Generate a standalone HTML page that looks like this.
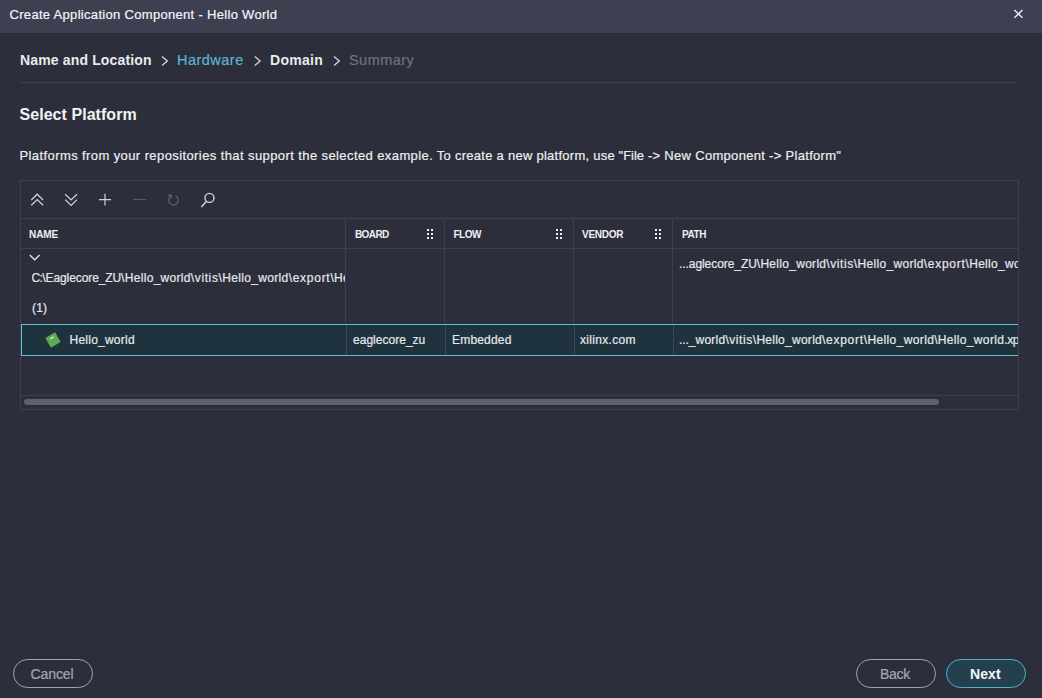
<!DOCTYPE html>
<html lang="en">
<head>
<meta charset="utf-8">
<title>Create Application Component - Hello World</title>
<style>
*{box-sizing:border-box;margin:0;padding:0}
html,body{width:1042px;height:698px;overflow:hidden;background:#2c2f3b}
body{font-family:"Liberation Sans",sans-serif;color:#f0f1f4;position:relative;font-size:13px}
.abs{position:absolute;white-space:nowrap;line-height:1}
.rg{-webkit-text-stroke:.2px currentColor}
.clip{position:absolute;white-space:nowrap;line-height:20px;overflow:hidden}
#titlebar{position:absolute;left:0;top:0;width:1042px;height:33px;background:#3c4051}
#title{left:9.5px;top:8px;font-size:13px;color:#f4f5f7;letter-spacing:.31px}
#closex{position:absolute;left:1013.5px;top:9px;width:10px;height:10px}
.crumb{font-size:14px;top:53px}
.crumb.b{font-weight:bold;color:#e9eaee;letter-spacing:.11px}
.crumb.a{color:#5fb4cf;letter-spacing:.48px;font-size:14.5px;top:52.6px}
.crumb.d{color:#6d7285;letter-spacing:.45px;font-size:14.5px;top:52.6px}
.chev{position:absolute;top:55px;width:8px;height:12px}
#hr{position:absolute;left:20px;top:82px;width:998px;height:1px;background:#3c4050}
#h1{left:19.5px;top:107px;font-size:16px;font-weight:bold;color:#f2f3f5;letter-spacing:.05px}
#desc{left:19.5px;top:149px;font-size:13px;color:#eceef1;white-space:pre}
#box{position:absolute;left:20px;top:180px;width:999px;height:230px;border:1px solid #3c4050}
.hl{position:absolute;left:21px;width:997px;height:1px;background:#3c4050}
.vl{position:absolute;width:1px;background:#3c4050;top:219px;height:105px}
.th{font-size:10px;font-weight:bold;color:#eef0f3;top:229.5px}
.td{font-size:12px;color:#e6e8ec;letter-spacing:.24px}
.grip{position:absolute;top:229px;width:6px;height:10px}
.grip i{position:absolute;width:2px;height:2px;background:#eef0f3}
#sel{position:absolute;left:21px;top:324px;width:997px;height:32px;background:#1f333e;border:1px solid #5fc0d5;border-right:none}
.svl{position:absolute;width:1px;background:#3d4456;top:325px;height:30px}
#sb{position:absolute;left:24px;top:399px;width:915px;height:6px;border-radius:3px;background:#5c6071}
.btn{position:absolute;top:659px;width:80px;height:29px;border-radius:15px;border:1px solid #a0a3b0}
.bt{font-size:14px;top:667px;color:#a3a6b3}
#nextb{background:#24404f;border-color:#4fb0cb}
#next{color:#f4f6f8;font-weight:bold}
svg{display:block;overflow:visible}
.tb{position:absolute;left:0;top:0;width:1042px;height:698px;pointer-events:none}
</style>
</head>
<body>
<div id="titlebar"></div>
<div id="title" class="abs rg">Create Application Component - Hello World</div>

<div class="abs crumb b" id="c1" style="left:20px;letter-spacing:.15px">Name and Location</div>
<div class="abs rg crumb a" id="c2" style="left:177px">Hardware</div>
<div class="abs crumb b" id="c3" style="left:270px;letter-spacing:.3px">Domain</div>
<div class="abs rg crumb d" id="c4" style="left:349px">Summary</div>
<div id="hr"></div>

<div id="h1" class="abs">Select Platform</div>
<div id="desc" class="abs rg"><span style="letter-spacing:.405px">Platforms from your repositories that support the selected example.</span><span style="letter-spacing:.263px"> To create a new platform, use</span><span style="letter-spacing:-.03px"> "File</span><span style="letter-spacing:.305px"> -&gt; New Component -&gt; Platform"</span></div>

<div id="box"></div>
<div class="hl" style="top:218px"></div>
<div class="hl" style="top:248px"></div>
<div class="hl" style="top:395px"></div>
<div class="vl" style="left:345px"></div>
<div class="vl" style="left:444px"></div>
<div class="vl" style="left:573px"></div>
<div class="vl" style="left:672px"></div>

<div class="abs th" id="th1" style="left:29px;letter-spacing:-.08px">NAME</div>
<div class="abs th" id="th2" style="left:355px;letter-spacing:-.6px">BOARD</div>
<div class="abs th" id="th3" style="left:453.5px;letter-spacing:-.5px">FLOW</div>
<div class="abs th" id="th4" style="left:582px;letter-spacing:-.28px">VENDOR</div>
<div class="abs th" id="th5" style="left:682px;letter-spacing:-.4px">PATH</div>

<div class="grip" style="left:427px"><i style="left:0;top:0"></i><i style="left:4px;top:0"></i><i style="left:0;top:4px"></i><i style="left:4px;top:4px"></i><i style="left:0;top:8px"></i><i style="left:4px;top:8px"></i></div>
<div class="grip" style="left:556px"><i style="left:0;top:0"></i><i style="left:4px;top:0"></i><i style="left:0;top:4px"></i><i style="left:4px;top:4px"></i><i style="left:0;top:8px"></i><i style="left:4px;top:8px"></i></div>
<div class="grip" style="left:655px"><i style="left:0;top:0"></i><i style="left:4px;top:0"></i><i style="left:0;top:4px"></i><i style="left:4px;top:4px"></i><i style="left:0;top:8px"></i><i style="left:4px;top:8px"></i></div>

<div class="clip rg td" id="g1" style="left:31.5px;top:268px;width:313.5px"><span style="letter-spacing:-0.600px">C:</span><span style="letter-spacing:-0.096px">\Eaglecore_ZU</span><span style="letter-spacing:0.306px">\Hello_world</span><span style="letter-spacing:0.617px">\vitis</span><span style="letter-spacing:0.339px">\Hello_world</span><span style="letter-spacing:0.730px">\export</span><span style="letter-spacing:0.314px">\Hello_world</span></div>
<div class="abs rg td" id="g2" style="left:32px;top:302.3px;letter-spacing:.15px">(1)</div>
<div class="clip rg td" id="g3" style="left:679px;top:254px;width:339px"><span style="letter-spacing:-0.072px">...</span><span style="letter-spacing:-0.064px">aglecore_ZU</span><span style="letter-spacing:0.289px">\Hello_world</span><span style="letter-spacing:0.583px">\vitis</span><span style="letter-spacing:0.322px">\Hello_world</span><span style="letter-spacing:0.730px">\export</span><span style="letter-spacing:0.314px">\Hello_world</span></div>

<div id="sel"></div>
<div class="svl" style="left:346px"></div>
<div class="svl" style="left:445px"></div>
<div class="svl" style="left:574px"></div>
<div class="svl" style="left:673px"></div>
<div class="abs rg td" id="r1" style="left:69.5px;top:333.5px">Hello_world</div>
<div class="abs rg td" id="r2" style="left:353px;top:333.5px;letter-spacing:.02px">eaglecore_zu</div>
<div class="abs rg td" id="r3" style="left:452px;top:333.5px;letter-spacing:.19px">Embedded</div>
<div class="abs rg td" id="r4" style="left:580px;top:333.5px;letter-spacing:.32px">xilinx.com</div>
<div class="clip rg td" id="r5" style="left:679px;top:329.5px;width:339px"><span style="letter-spacing:-0.139px">...</span><span style="letter-spacing:0.240px">_world</span><span style="letter-spacing:0.567px">\vitis</span><span style="letter-spacing:0.264px">\Hello_world</span><span style="letter-spacing:0.730px">\export</span><span style="letter-spacing:0.364px">\Hello_world</span><span style="letter-spacing:0.331px">\Hello_world</span><span style="letter-spacing:-0.369px">.xpfm</span></div>

<div id="sb"></div>

<svg class="tb" viewBox="0 0 1042 698">
<path id="closex" d="M1014.4 10 L1022.5 17.8 M1022.5 10 L1014.4 17.8" stroke="#f4f5f7" stroke-width="1.3" fill="none"/>
<!-- breadcrumb chevrons -->
<g fill="none" stroke="#cfd2d9" stroke-width="1.4">
<path d="M162 56.5 L167.3 61 L162 65.5"/>
<path d="M254.8 56.5 L260.1 61 L254.8 65.5"/>
<path d="M334 56.5 L339.3 61 L334 65.5"/>
</g>
<!-- toolbar icons -->
<g fill="none" stroke="#d3d5dc" stroke-width="1.2">
<path d="M31.3 200 L37.2 194.2 L43.1 200 M31.3 205.3 L37.2 199.5 L43.1 205.3"/>
<path d="M65.2 194.2 L71.1 200 L77 194.2 M65.2 199.6 L71.1 205.4 L77 199.6"/>
<path d="M99 199.6 H111.1 M105 193.8 V205.4"/>
<circle cx="209.5" cy="197.9" r="4.5" stroke-width="1.4"/>
<path d="M206.2 201.6 L201.4 206.9" stroke-width="1.5"/>
</g>
<g fill="none" stroke="#5c6272" stroke-width="1.25">
<path d="M133 199.5 H146" stroke-width="1" stroke="#555a6a"/>
<path d="M175.4 195.8 A4.8 4.8 0 1 1 169.7 197.1"/>
<path d="M168.3 195 L171.5 194.8 L171.5 198 Z" fill="#5c6272" stroke-width=".8"/>
</g>
<!-- row chevron -->
<path d="M29.8 255 L34.7 259.8 L39.6 255" fill="none" stroke="#e6e8ec" stroke-width="1.2"/>
<!-- platform icon -->
<g transform="translate(53 340) rotate(-30)">
<rect x="-5.6" y="-5.6" width="11.2" height="11.2" fill="#5dab55"/>
</g>
<path d="M50.3 339.3 Q51.5 337.4 53.8 337.2" fill="none" stroke="#f0f4ee" stroke-width="1.2"/>
</svg>

<div class="btn" id="cancelb" style="left:13px"></div>
<div class="btn" id="backb" style="left:856px"></div>
<div class="btn" id="nextb" style="left:946px"></div>
<div class="abs rg bt" id="cancel" style="left:30.5px;letter-spacing:-.08px">Cancel</div>
<div class="abs rg bt" id="back" style="left:880px;letter-spacing:-.3px">Back</div>
<div class="abs bt" id="next" style="left:970px;letter-spacing:.11px">Next</div>
</body>
</html>
